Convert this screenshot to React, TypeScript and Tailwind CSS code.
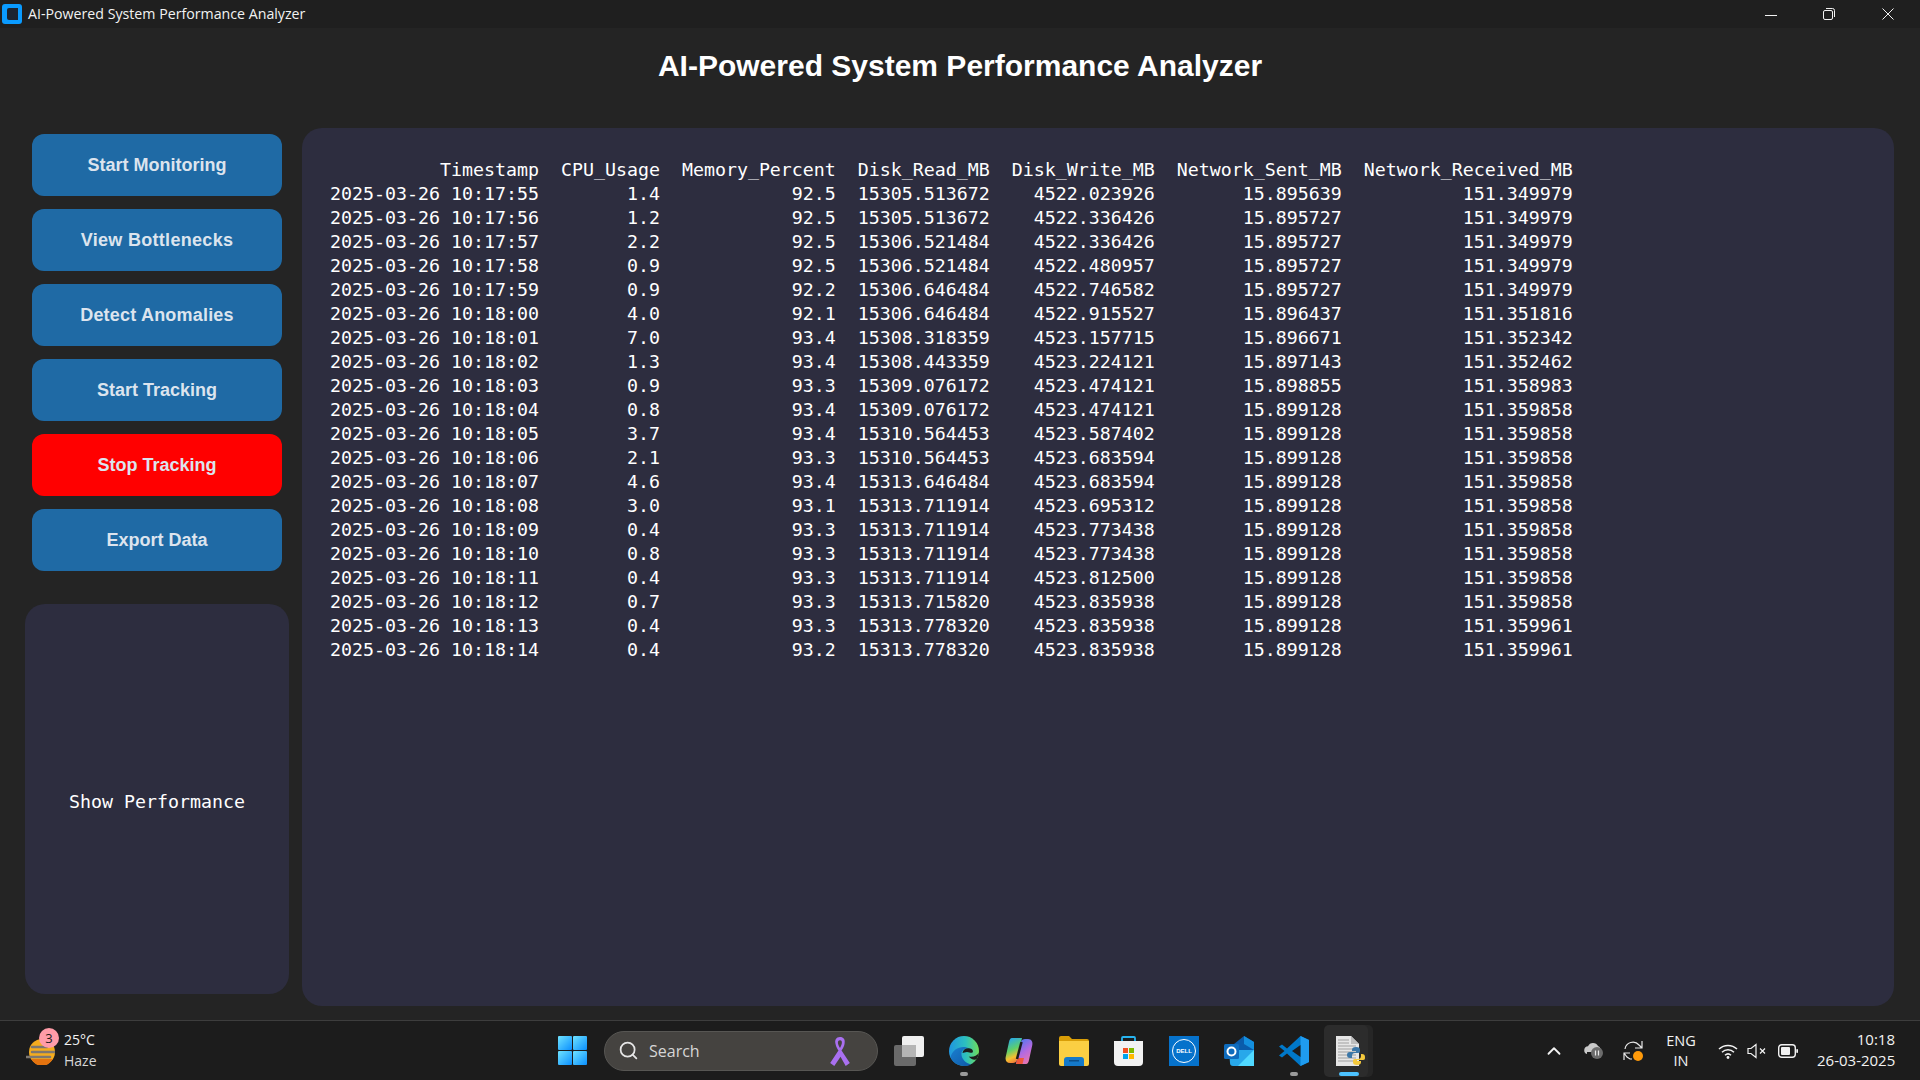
import { ChevronUp, Search } from 'lucide-react';

const rows: [string, string, string, string, string, string, string][] = [
  ['2025-03-26 10:17:55', '1.4', '92.5', '15305.513672', '4522.023926', '15.895639', '151.349979'],
  ['2025-03-26 10:17:56', '1.2', '92.5', '15305.513672', '4522.336426', '15.895727', '151.349979'],
  ['2025-03-26 10:17:57', '2.2', '92.5', '15306.521484', '4522.336426', '15.895727', '151.349979'],
  ['2025-03-26 10:17:58', '0.9', '92.5', '15306.521484', '4522.480957', '15.895727', '151.349979'],
  ['2025-03-26 10:17:59', '0.9', '92.2', '15306.646484', '4522.746582', '15.895727', '151.349979'],
  ['2025-03-26 10:18:00', '4.0', '92.1', '15306.646484', '4522.915527', '15.896437', '151.351816'],
  ['2025-03-26 10:18:01', '7.0', '93.4', '15308.318359', '4523.157715', '15.896671', '151.352342'],
  ['2025-03-26 10:18:02', '1.3', '93.4', '15308.443359', '4523.224121', '15.897143', '151.352462'],
  ['2025-03-26 10:18:03', '0.9', '93.3', '15309.076172', '4523.474121', '15.898855', '151.358983'],
  ['2025-03-26 10:18:04', '0.8', '93.4', '15309.076172', '4523.474121', '15.899128', '151.359858'],
  ['2025-03-26 10:18:05', '3.7', '93.4', '15310.564453', '4523.587402', '15.899128', '151.359858'],
  ['2025-03-26 10:18:06', '2.1', '93.3', '15310.564453', '4523.683594', '15.899128', '151.359858'],
  ['2025-03-26 10:18:07', '4.6', '93.4', '15313.646484', '4523.683594', '15.899128', '151.359858'],
  ['2025-03-26 10:18:08', '3.0', '93.1', '15313.711914', '4523.695312', '15.899128', '151.359858'],
  ['2025-03-26 10:18:09', '0.4', '93.3', '15313.711914', '4523.773438', '15.899128', '151.359858'],
  ['2025-03-26 10:18:10', '0.8', '93.3', '15313.711914', '4523.773438', '15.899128', '151.359858'],
  ['2025-03-26 10:18:11', '0.4', '93.3', '15313.711914', '4523.812500', '15.899128', '151.359858'],
  ['2025-03-26 10:18:12', '0.7', '93.3', '15313.715820', '4523.835938', '15.899128', '151.359858'],
  ['2025-03-26 10:18:13', '0.4', '93.3', '15313.778320', '4523.835938', '15.899128', '151.359961'],
  ['2025-03-26 10:18:14', '0.4', '93.2', '15313.778320', '4523.835938', '15.899128', '151.359961'],
];

const header = ['Timestamp', 'CPU_Usage', 'Memory_Percent', 'Disk_Read_MB', 'Disk_Write_MB', 'Network_Sent_MB', 'Network_Received_MB'];
const widths = [19, 9, 14, 12, 13, 15, 19];

const line = (cells: string[]) => cells.map((c, i) => c.padStart(widths[i])).join('  ');
const tableText = [line(header), ...rows.map(line)].join('\n');

const buttons = [
  { label: 'Start Monitoring', cls: 'bg-[#1f6aa5]' },
  { label: 'View Bottlenecks', cls: 'bg-[#1f6aa5] tracking-[0.3px]' },
  { label: 'Detect Anomalies', cls: 'bg-[#1f6aa5] tracking-[0.2px]' },
  { label: 'Start Tracking', cls: 'bg-[#1f6aa5]' },
  { label: 'Stop Tracking', cls: 'bg-[#ff0000]' },
  { label: 'Export Data', cls: 'bg-[#1f6aa5]' },
];

const AppIcon = () => (
  <svg width="20" height="20" viewBox="0 0 20 20">
    <rect width="20" height="20" rx="3" fill="#0a9bff" />
    <path d="M7 4h9v12H7a2 2 0 0 1-2-2V6a2 2 0 0 1 2-2z" fill="#1c2430" />
  </svg>
);

const WinControls = () => (
  <div className="ml-auto flex items-center h-full">
    <svg width="12" height="12" viewBox="0 0 12 12" className="mr-[46px]">
      <path d="M0 7.5h12" stroke="#f2f2f2" strokeWidth="1" />
    </svg>
    <svg width="12" height="12" viewBox="0 0 12 12" className="mr-[47px]">
      <rect x="0.5" y="2.5" width="9" height="9" rx="1.5" fill="none" stroke="#f2f2f2" />
      <path d="M3 0.5h6.5a2 2 0 0 1 2 2V9" fill="none" stroke="#f2f2f2" />
    </svg>
    <svg width="12" height="12" viewBox="0 0 12 12" className="mr-[26px]">
      <path d="M0.5 0.5l11 11M11.5 0.5l-11 11" stroke="#f2f2f2" />
    </svg>
  </div>
);

const StartIcon = () => (
  <svg width="29" height="29" viewBox="0 0 29 29">
    <defs>
      <linearGradient id="st" x1="0" y1="0" x2="1" y2="1">
        <stop offset="0" stopColor="#6fe3ff" />
        <stop offset="1" stopColor="#0a8fff" />
      </linearGradient>
    </defs>
    <rect x="0" y="0" width="14" height="14" rx="1" fill="url(#st)" />
    <rect x="15" y="0" width="14" height="14" rx="1" fill="url(#st)" />
    <rect x="0" y="15" width="14" height="14" rx="1" fill="url(#st)" />
    <rect x="15" y="15" width="14" height="14" rx="1" fill="url(#st)" />
  </svg>
);

const Ribbon = () => (
  <svg width="22" height="30" viewBox="0 0 21 29">
    <path d="M10.5 1c-4 0-5 3-4.5 6 .6 3.5 3 7 3 7L1 26l4 3 6-9 5 9 4-3-8-12s3-4 3-7.5C15.5 3.5 14 1 10.500 1zm0 3c1.500 0 2 1.200 1.800 3-.2 1.300-1 3-1.800 4.500C9.500 10 8.700 8.300 8.500 7c-.2-1.800.5-3 2-3z" fill="#a970f0" />
  </svg>
);

const TaskView = () => (
  <svg width="30" height="30" viewBox="0 0 30 30">
    <rect x="0" y="9" width="22" height="21" rx="2" fill="#6a6a6a" />
    <rect x="8" y="0" width="22" height="21" rx="2" fill="#f0f0f0" />
    <rect x="8" y="9" width="14" height="12" fill="#b5b5b5" />
  </svg>
);

const EdgeIcon = () => (
  <svg width="30" height="30" viewBox="0 0 30 30">
    <defs>
      <linearGradient id="eg1" x1="0" y1="0.5" x2="1" y2="0.5">
        <stop offset="0" stopColor="#1f95e0" />
        <stop offset="0.55" stopColor="#2cbfc0" />
        <stop offset="1" stopColor="#6fdc5a" />
      </linearGradient>
      <linearGradient id="eg2" x1="0" y1="0" x2="1" y2="1">
        <stop offset="0" stopColor="#1a7fd0" />
        <stop offset="1" stopColor="#0f5aa8" />
      </linearGradient>
    </defs>
    <circle cx="15" cy="15" r="15" fill="url(#eg1)" />
    <path d="M1.5 21C4 12 14 8.500 21 13c-5-1.500-9 1.500-8.500 6 .4 4 4 8 9.500 9.500-2 1-4.500 1.500-7 1.500C9 30 3.500 26.500 1.500 21z" fill="url(#eg2)" />
    <path d="M13.500 17c.5-3.500 4-5.500 7.500-4.500 3 .8 3.500 3 2.500 4-1.500 1-3-.5-5.500-.5-2 0-3 1-4.500 1z" fill="#1c1c1c" />
    <path d="M29.800 17c-2 3-6 4.500-10 3.500 1.500 2.500 4.500 3.500 7.500 3 1.500-2 2.300-4.200 2.500-6.500z" fill="#1c1c1c" />
  </svg>
);

const CopilotIcon = () => (
  <svg width="28" height="28" viewBox="0 0 28 28">
    <defs>
      <linearGradient id="cp1" x1="0.3" y1="0" x2="0.6" y2="1">
        <stop offset="0" stopColor="#28a8e8" />
        <stop offset="0.45" stopColor="#5fd06a" />
        <stop offset="0.75" stopColor="#f5c030" />
        <stop offset="1" stopColor="#f0703a" />
      </linearGradient>
      <linearGradient id="cp2" x1="0.3" y1="0" x2="0.8" y2="1">
        <stop offset="0" stopColor="#4f78ee" />
        <stop offset="0.5" stopColor="#b46ae0" />
        <stop offset="1" stopColor="#f078a8" />
      </linearGradient>
    </defs>
    <path d="M7 1h10l-5 22c-.5 2-2 3-4 3H5c-3.500 0-5-3-4.300-6L4 5c.5-2.500 1.500-4 3-4z" fill="url(#cp1)" />
    <path d="M21 27H11l5-22c.5-2 2-3 4-3h3c3.500 0 5 3 4.300 6L24 23c-.5 2.500-1.500 4-3 4z" fill="url(#cp2)" />
    <path d="M11 27l1.500-6h6.500L17.500 27z" fill="#f0583a" />
    <path d="M16.500 5l-4.500 17" stroke="#1c1c1c" strokeWidth="2.500" />
  </svg>
);

const FolderIcon = () => (
  <svg width="30" height="30" viewBox="0 0 30 30">
    <path d="M0 2a2 2 0 0 1 2-2h8l3 3h15a2 2 0 0 1 2 2v3H0z" fill="#d99e07" />
    <path d="M0 5h30v23a2 2 0 0 1-2 2H2a2 2 0 0 1-2-2z" fill="#fbcf43" />
    <path d="M5 28v-4a3 3 0 0 1 3-3h14a3 3 0 0 1 3 3v6H5z" fill="#1479c9" />
    <rect x="10" y="24" width="10" height="1.5" fill="#0b4f8a" />
  </svg>
);

const StoreIcon = () => (
  <svg width="29" height="30" viewBox="0 0 29 30">
    <path d="M8 6V2a1 1 0 0 1 1-1h11a1 1 0 0 1 1 1v4" fill="none" stroke="#27b4f0" strokeWidth="1.8" />
    <path d="M0 5h29v21a4 4 0 0 1-4 4H4a4 4 0 0 1-4-4z" fill="#f2f2f2" />
    <rect x="9" y="12" width="5" height="5" fill="#f25022" />
    <rect x="15" y="12" width="5" height="5" fill="#7fba00" />
    <rect x="9" y="18" width="5" height="5" fill="#00a4ef" />
    <rect x="15" y="18" width="5" height="5" fill="#ffb900" />
  </svg>
);

const DellIcon = () => (
  <div className="w-[30px] h-[30px] bg-[#0672cb] flex items-center justify-center">
    <div className="w-[24px] h-[24px] rounded-full border border-white flex items-center justify-center">
      <span className="text-white text-[6px] font-bold font-['Liberation_Sans',sans-serif] leading-none">DELL</span>
    </div>
  </div>
);

const OutlookIcon = () => (
  <svg width="30" height="30" viewBox="0 0 30 30">
    <path d="M10 8l10-8 10 6v8H10z" fill="#0a5cab" />
    <path d="M20 0l10 6v8l-10-6z" fill="#1490df" />
    <path d="M5 14h25v14a2 2 0 0 1-2 2H9a3 3 0 0 1-3-3z" fill="#28a8ea" />
    <path d="M30 14v16H14z" fill="#50d9ff" />
    <rect x="0" y="8" width="15" height="15" rx="1.5" fill="#0f6cbd" />
    <circle cx="7.5" cy="15.5" r="4" fill="none" stroke="#fff" strokeWidth="2" />
  </svg>
);

const VsCodeIcon = () => (
  <svg width="30" height="30" viewBox="0 0 30 30">
    <path d="M21.5 0L30 4v22l-8.500 4L8 17.500l-5 4L0 19.500 5.500 15 0 10.500 3 8.500l5 4z" fill="#0078c9" />
    <path d="M21.5 0L30 4v22l-8.500 4z" fill="#1f9cf0" />
    <path d="M21.5 9L13 15l8.500 6z" fill="#1c1c1c" />
  </svg>
);

const PyFileIcon = () => (
  <svg width="30" height="30" viewBox="0 0 30 30">
    <path d="M1 0h15l8 8v22H1z" fill="#e6e6e6" />
    <path d="M16 0l8 8h-8z" fill="#bdbdbd" />
    {[4, 7, 10, 13, 16, 19, 22, 25].map(y => (
      <path key={y} d={`M3 ${y}h${y < 8 ? 11 : 18}`} stroke="#a0a0a0" strokeWidth="1" />
    ))}
    <path d="M21 11c-3 0-4 1-4 3v1h4v1h-6c-2 0-3 1-3 3s1 3 3 3h2v-2c0-2 1-3 3-3h3c2 0 2-1 2-2v-1c0-2-1-3-4-3z" fill="#3b77a8" />
    <path d="M22 29c3 0 4-1 4-3v-1h-4v-1h6c2 0 2-1 2-3s-1-3-3-3h-1v2c0 2-1 3-3 3h-3c-2 0-2 1-2 2v1c0 2 1 3 4 3z" fill="#f5c93c" />
  </svg>
);

const WeatherIcon = () => (
  <svg width="29" height="26" viewBox="0 0 29 26">
    <circle cx="16" cy="13" r="13" fill="#f4ac1e" />
    <path d="M5 20h22l-3 3.500a11 11 0 0 1-16 0z" fill="#e4730f" />
    <path d="M6 8h15M6 13h22M0 18h24" stroke="#7d7770" strokeWidth="2.500" strokeLinecap="round" />
  </svg>
);

const Taskbar = () => (
  <div className="h-[60px] border-t border-[#3d3d3d] bg-[#1c1c1c] flex items-center relative font-['Open_Sans',sans-serif] text-[#f2f2f2]">
    <div className="flex items-center w-[558px] pl-[26px]">
      <div className="relative mt-[3px]">
        <WeatherIcon />
        <span className="absolute left-[13px] top-[-11px] w-[20px] h-[20px] rounded-full bg-[#ff9ca8] text-[#1c1c1c] text-[13px] leading-[20px] text-center">3</span>
      </div>
      <div className="ml-[9px] -mt-[2px] text-[14px] leading-[21px]">
        <div>25°C</div>
        <div className="text-[#d6d6d6]">Haze</div>
      </div>
    </div>
    <StartIcon />
    <div className="ml-[17px] w-[274px] h-[40px] rounded-full bg-[#454340] border border-[#575653] flex items-center pl-[13px] pr-[26px]">
      <Search size={21} strokeWidth={2} className="text-[#e6e6e6]" />
      <span className="ml-[10px] text-[16px] text-[#d6d6d6]">Search</span>
      <div className="ml-auto"><Ribbon /></div>
    </div>
    <div className="ml-[16px]"><TaskView /></div>
    <div className="ml-[25px] relative">
      <EdgeIcon />
      <span className="absolute left-[11px] top-[36px] w-[8px] h-[4px] rounded-full bg-[#9a9a9a]" />
    </div>
    <div className="ml-[26px]"><CopilotIcon /></div>
    <div className="ml-[26px]"><FolderIcon /></div>
    <div className="ml-[25px]"><StoreIcon /></div>
    <div className="ml-[26px]"><DellIcon /></div>
    <div className="ml-[25px]"><OutlookIcon /></div>
    <div className="ml-[25px] relative">
      <VsCodeIcon />
      <span className="absolute left-[11px] top-[36px] w-[8px] h-[4px] rounded-full bg-[#9a9a9a]" />
    </div>
    <div className="ml-[15px] w-[44px] h-[52px] rounded-[5px] bg-[#2c2c2c] flex items-center justify-center pl-[7px] relative shadow-[5px_0_0_#262626]">
      <PyFileIcon />
      <span className="absolute left-[15px] bottom-[1px] w-[20px] h-[4px] rounded-full bg-[#4cc2ff]" />
    </div>

    <div className="ml-auto flex items-center pr-[25px]">
      <ChevronUp size={22} strokeWidth={2} className="text-[#f2f2f2]" />
      <svg width="20" height="17" viewBox="0 0 20 17" className="ml-[18px]">
        <path d="M4 12a4 4 0 0 1 1-7.800A5.500 5.500 0 0 1 15 4a4 4 0 0 1 2 6H4z" fill="#c9c9c9" />
        <circle cx="14" cy="11" r="6" fill="#6c6c6c" />
        <path d="M12.500 8.500v5M15.500 8.500v5" stroke="#e8e8e8" strokeWidth="1.200" />
      </svg>
      <svg width="21" height="22" viewBox="0 0 21 22" className="ml-[20px]">
        <path d="M2 9a8 8 0 0 1 14-4l3 3M19 1v7h-7" fill="none" stroke="#e8e8e8" strokeWidth="1.200" />
        <path d="M1 13l3 4 3 2h2M1 20v-7h6" fill="none" stroke="#e8e8e8" strokeWidth="1.200" />
        <circle cx="15" cy="16" r="5" fill="#ff9a0a" />
      </svg>
      <div className="ml-[19px] text-[14.5px] leading-[20px] text-center w-[36px]">
        <div>ENG</div>
        <div>IN</div>
      </div>
      <svg width="20" height="16" viewBox="0 0 20 16" className="ml-[19px]">
        <path d="M1 6a13 13 0 0 1 18 0M4 9.200a8.500 8.500 0 0 1 12 0M7 12.200a4.500 4.500 0 0 1 6 0" fill="none" stroke="#f2f2f2" strokeWidth="1.500" />
        <circle cx="10" cy="14.500" r="1.400" fill="#f2f2f2" />
      </svg>
      <svg width="20" height="16" viewBox="0 0 20 16" className="ml-[9px]">
        <path d="M1 5.500h3L9 1.500v13l-5-4H1z" fill="none" stroke="#f2f2f2" strokeWidth="1.200" />
        <path d="M13 5.500l5 5M18 5.500l-5 5" stroke="#f2f2f2" strokeWidth="1.200" />
      </svg>
      <svg width="20" height="14" viewBox="0 0 20 14" className="ml-[11px]">
        <rect x="0.7" y="0.7" width="16.600" height="12.600" rx="3" fill="none" stroke="#f2f2f2" strokeWidth="1.400" />
        <rect x="3" y="3" width="9" height="8" rx="1" fill="#f2f2f2" />
        <rect x="18.3" y="5" width="1.700" height="4" rx="0.800" fill="#f2f2f2" />
      </svg>
      <div className="ml-[19px] -mt-[2px] w-[78px] text-right text-[15px] leading-[21px]">
        <div>10:18</div>
        <div className="whitespace-nowrap">26-03-2025</div>
      </div>
    </div>
  </div>
);

export default function App() {
  return (
    <div className="w-[1920px] h-[1080px] flex flex-col bg-[#242424] overflow-hidden">
      <div className="h-7 shrink-0 bg-[#1f1f1f] flex items-center pl-[2px] text-[#f2f2f2] font-['Open_Sans',sans-serif] text-[14.2px]">
        <AppIcon />
        <span className="ml-[6px]">AI-Powered System Performance Analyzer</span>
        <WinControls />
      </div>

      <div className="h-[100px] shrink-0 pt-[18px] text-center font-['Liberation_Sans',sans-serif] font-bold text-[30px] leading-[40px] text-[#ffffff]">
        AI-Powered System Performance Analyzer
      </div>

      <div className="flex flex-1 pl-[25px] pb-[14px] min-h-0">
        <div className="w-[264px] shrink-0 flex flex-col pt-[6px]">
          <div className="flex flex-col gap-[13px] px-[7px]">
            {buttons.map(b => (
              <button key={b.label} className={`h-[62px] rounded-[12px] font-['Liberation_Sans',sans-serif] font-bold text-[18px] text-[#dce4ee] ${b.cls}`}>
                {b.label}
              </button>
            ))}
          </div>
          <div className="mt-[33px] h-[390px] pt-[5px] rounded-[20px] bg-[#2d2d3f] flex items-center justify-center text-[#ffffff] font-['DejaVu_Sans_Mono',monospace] text-[18.27px]">
            Show Performance
          </div>
        </div>

        <div className="ml-[13px] w-[1592px] rounded-[20px] bg-[#2d2d3f] pl-[28px] pt-[30px]">
          <pre className="font-['DejaVu_Sans_Mono',monospace] text-[18.27px] leading-[24px] text-[#ffffff]">{tableText}</pre>
        </div>
      </div>

      <Taskbar />
    </div>
  );
}
